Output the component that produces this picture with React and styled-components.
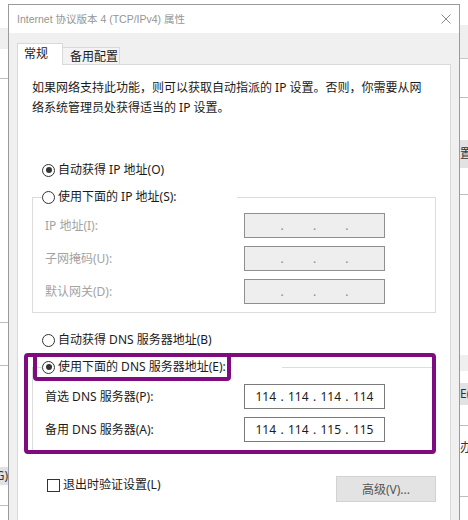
import React from "react";
import styled, { createGlobalStyle } from "styled-components";

const GlobalStyle = createGlobalStyle`
  html, body { margin: 0; padding: 0; background: #fff; }
  body {
    width: 468px; height: 520px; overflow: hidden;
    font-family: "Noto Sans", "Noto Sans CJK SC", sans-serif;
    color: #1b1b1b;
  }
`;

const Screen = styled.div`
  display: flex;
  height: 520px;
  overflow: hidden;
`;

const Strip = styled.div`
  width: ${(p) => p.$w}px;
  flex-shrink: 0;
  display: flex;
  flex-direction: column;
  overflow: hidden;
  background: #fff;
`;

const Rule = styled.div`
  margin-top: ${(p) => p.$top}px;
  height: 1px;
  background: #bdbdbd;
`;

const Shade = styled.div`
  margin-top: ${(p) => p.$top}px;
  height: ${(p) => p.$h}px;
  background: #efefef;
  border-bottom: ${(p) => (p.$line ? "1px solid #c8c8c8" : "none")};
`;

const StripButton = styled.div`
  margin-top: ${(p) => p.$top}px;
  height: ${(p) => p.$h}px;
  background: #e2e2e2;
  font-size: 12px;
  line-height: ${(p) => p.$h}px;
  color: #333;
  white-space: nowrap;
  display: flex;
  justify-content: ${(p) => (p.$right ? "flex-end" : "flex-start")};
`;

const StripText = styled.div`
  margin-top: ${(p) => p.$top}px;
  font-size: 12px;
  line-height: 16px;
  white-space: nowrap;
  color: #333;
`;

const Dialog = styled.div`
  width: 452px;
  flex-shrink: 0;
  margin-top: 4px;
  box-sizing: border-box;
  border: 1px solid #9b9b9b;
  border-bottom: none;
  background: #f0f0f0;
  display: flex;
  flex-direction: column;
`;

const TitleBar = styled.div`
  height: 28px;
  background: #fff;
  display: flex;
  align-items: center;
  justify-content: space-between;
  padding: 0 8px;
`;

const Title = styled.div`
  font-family: "Liberation Sans", "Noto Sans CJK SC", sans-serif;
  font-size: 10.5px;
  line-height: 16px;
  color: #959595;
  white-space: nowrap;
`;

const Body = styled.div`
  flex: 1;
  padding: 10px 8px 0;
  display: flex;
  flex-direction: column;
`;

const TabRow = styled.div`
  display: flex;
  align-items: flex-end;
  height: 21px;
`;

const Tab = styled.div`
  box-sizing: border-box;
  width: ${(p) => (p.$active ? 46 : 57)}px;
  height: ${(p) => (p.$active ? 22 : 17)}px;
  margin-bottom: ${(p) => (p.$active ? -1 : 0)}px;
  position: relative;
  z-index: ${(p) => (p.$active ? 1 : 0)};
  background: ${(p) => (p.$active ? "#fff" : "#f3f3f3")};
  border: 1px solid #d9d9d9;
  border-bottom: none;
  border-left: ${(p) => (p.$active ? "1px solid #d9d9d9" : "none")};
  padding: ${(p) => (p.$active ? "1px 0 0 6px" : "0 0 0 7px")};
  font-size: 12px;
  line-height: 18px;
  color: #1b1b1b;
  white-space: nowrap;
`;

const Panel = styled.div`
  flex: 1;
  background: #fff;
  border: 1px solid #d9d9d9;
  border-bottom: none;
  padding: 13px 14px 0 14px;
  display: flex;
  flex-direction: column;
`;

const Intro = styled.p`
  margin: 0;
  font-size: 12px;
  line-height: 20px;
  white-space: nowrap;
`;

const RadioRow = styled.label`
  display: flex;
  align-items: center;
  gap: 3px;
  height: 20px;
  margin-top: ${(p) => p.$top || 0}px;
  margin-left: ${(p) => p.$left || 0}px;
  font-size: 12px;
  line-height: 20px;
  white-space: nowrap;
`;

const Radio = styled.span`
  box-sizing: border-box;
  width: 13px;
  height: 13px;
  border-radius: 50%;
  border: 1px solid #333;
  display: flex;
  align-items: center;
  justify-content: center;
  flex-shrink: 0;
  &::after {
    content: "";
    width: 6px;
    height: 6px;
    border-radius: 50%;
    background: ${(p) => (p.$checked ? "#333" : "transparent")};
  }
`;

const Fieldset = styled.fieldset`
  margin: ${(p) => p.$top || 0}px 0 0 0;
  padding: 0;
  min-width: 0;
  border: 1px solid #dcdcdc;
`;

const Legend = styled.legend`
  margin-left: 9px;
  padding: 0;
  width: ${(p) => p.$w}px;
  box-sizing: border-box;
`;

const FieldGrid = styled.div`
  display: grid;
  grid-template-columns: 199px 141px;
  row-gap: 8px;
  align-items: center;
  padding: ${(p) => p.$pt}px 0 8px 12px;
`;

const FieldLabel = styled.span`
  font-size: 12px;
  line-height: 20px;
  color: ${(p) => (p.$disabled ? "#a3a3a3" : "#1b1b1b")};
  white-space: nowrap;
`;

const IpBox = styled.div`
  box-sizing: border-box;
  height: 25px;
  display: flex;
  align-items: center;
  padding: 0 8px;
  background: ${(p) => (p.$disabled ? "#eeeeee" : "#fff")};
  border: 1px solid ${(p) => (p.$disabled ? "#8f8f8f" : "#7a7a7a")};
  font-size: 12px;
  color: ${(p) => (p.$disabled ? "#8a8a8a" : "#1b1b1b")};
`;

const Octet = styled.span`
  width: 26px;
  text-align: center;
  line-height: 20px;
`;

const Dot = styled.span`
  width: 7px;
  text-align: center;
  line-height: 20px;
`;

const DnsArea = styled.div`
  position: relative;
  margin-top: 7px;
`;

const Highlight = styled.div`
  position: absolute;
  left: ${(p) => p.$x}px;
  top: ${(p) => p.$y}px;
  width: ${(p) => p.$w}px;
  height: ${(p) => p.$h}px;
  box-sizing: border-box;
  border: 4px solid #7e0b7f;
  border-radius: 4px;
  pointer-events: none;
`;

const Footer = styled.div`
  display: flex;
  justify-content: space-between;
  align-items: flex-start;
  margin-top: 25px;
`;

const CheckRow = styled.label`
  display: flex;
  align-items: center;
  gap: 3px;
  margin: -1px 0 0 15px;
  font-size: 12px;
  line-height: 20px;
  white-space: nowrap;
`;

const CheckBox = styled.span`
  box-sizing: border-box;
  width: 13px;
  height: 13px;
  border: 1px solid #333;
  background: #fff;
  flex-shrink: 0;
`;

const Button = styled.div`
  box-sizing: border-box;
  width: 100px;
  height: 26px;
  background: #e3e3e3;
  border: 1px solid #d2d2d2;
  display: flex;
  align-items: center;
  justify-content: center;
  font-size: 12px;
  color: #555;
  white-space: nowrap;
`;

function IpField({ values, disabled }) {
  const parts = values || ["", "", "", ""];
  const out = [];
  parts.forEach((v, i) => {
    if (i > 0) out.push(<Dot key={"d" + i}>.</Dot>);
    out.push(<Octet key={"o" + i}>{v}</Octet>);
  });
  return <IpBox $disabled={disabled}>{out}</IpBox>;
}

function CloseIcon() {
  return (
    <svg width="10" height="10" viewBox="0 0 10 10">
      <path d="M0.5 0.5 L9.5 9.5 M9.5 0.5 L0.5 9.5" stroke="#8c8c8c" strokeWidth="1" fill="none" />
    </svg>
  );
}

export default function App() {
  return (
    <>
      <GlobalStyle />
      <Screen>
        <Strip $w={8}>
          <Shade $top={28} $h={21} />
          <Rule $top={29} />
          <Rule $top={243} />
          <Rule $top={42} />
          <StripButton $top={101} $h={18} $right>G)</StripButton>
          <Rule $top={20} />
        </Strip>

        <Dialog>
          <TitleBar>
            <Title>Internet 协议版本 4 (TCP/IPv4) 属性</Title>
            <CloseIcon />
          </TitleBar>
          <Body>
            <TabRow>
              <Tab $active>常规</Tab>
              <Tab>备用配置</Tab>
            </TabRow>
            <Panel>
              <Intro>
                如果网络支持此功能，则可以获取自动指派的 IP 设置。否则，你需要从网
                <br />
                络系统管理员处获得适当的 IP 设置。
              </Intro>

              <RadioRow $top={42} $left={10}>
                <Radio $checked />
                自动获得 IP 地址(O)
              </RadioRow>

              <Fieldset $top={7}>
                <Legend $w={195}>
                  <RadioRow>
                    <Radio />
                    使用下面的 IP 地址(S):
                  </RadioRow>
                </Legend>
                <FieldGrid $pt={6}>
                  <FieldLabel $disabled>IP 地址(I):</FieldLabel>
                  <IpField disabled />
                  <FieldLabel $disabled>子网掩码(U):</FieldLabel>
                  <IpField disabled />
                  <FieldLabel $disabled>默认网关(D):</FieldLabel>
                  <IpField disabled />
                </FieldGrid>
              </Fieldset>

              <RadioRow $top={17} $left={10}>
                <Radio />
                自动获得 DNS 服务器地址(B)
              </RadioRow>

              <DnsArea>
                <Fieldset>
                  <Legend $w={240}>
                    <RadioRow>
                      <Radio $checked />
                      使用下面的 DNS 服务器地址(E):
                    </RadioRow>
                  </Legend>
                  <FieldGrid $pt={7}>
                    <FieldLabel>首选 DNS 服务器(P):</FieldLabel>
                    <IpField values={["114", "114", "114", "114"]} />
                    <FieldLabel>备用 DNS 服务器(A):</FieldLabel>
                    <IpField values={["114", "114", "115", "115"]} />
                  </FieldGrid>
                </Fieldset>
                <Highlight $x={-8} $y={-4} $w={412} $h={101} />
                <Highlight $x={1} $y={-4} $w={198} $h={28} />
              </DnsArea>

              <Footer>
                <CheckRow>
                  <CheckBox />
                  退出时验证设置(L)
                </CheckRow>
                <Button>高级(V)...</Button>
              </Footer>
            </Panel>
          </Body>
        </Dialog>

        <Strip $w={8}>
          <Shade $top={25} $h={33} $line />
          <Rule $top={38} />
          <StripButton $top={42} $h={28}>置(</StripButton>
          <Rule $top={26} />
          <Shade $top={160} $h={16} />
          <StripButton $top={12} $h={22}>E(</StripButton>
          <Rule $top={20} />
          <StripText $top={14}>办</StripText>
          <Rule $top={40} />
        </Strip>
      </Screen>
    </>
  );
}
